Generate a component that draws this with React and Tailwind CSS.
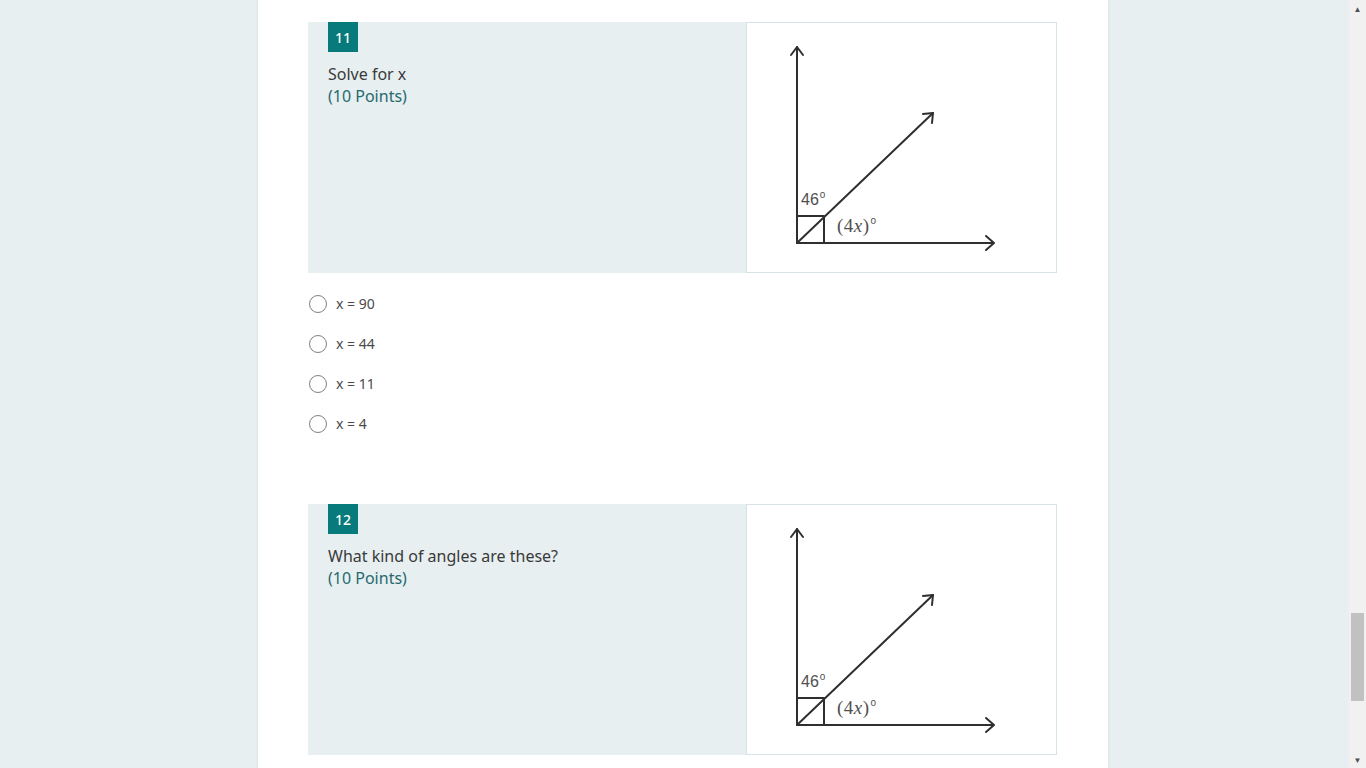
import React from 'react'

const questions = [
  {
    n: 11,
    title: 'Solve for x',
    points: '(10 Points)',
    options: ['x = 90', 'x = 44', 'x = 11', 'x = 4'],
  },
  {
    n: 12,
    title: 'What kind of angles are these?',
    points: '(10 Points)',
    options: [],
  },
]

function AngleFigure () {
  // open chevron arrows, drawn like the scanned worksheet image
  return (
    <svg width="309" height="248" viewBox="0 0 309 248" className="block">
      <g stroke="#2f2f2f" strokeWidth="2" fill="none" strokeLinecap="round" strokeLinejoin="round">
        <line x1="50" y1="220" x2="50" y2="24" />
        <polyline points="44,32 50,24 56,32" />
        <line x1="50" y1="220" x2="246" y2="220" />
        <polyline points="239,213 247,220 239,227" />
        <line x1="50" y1="220" x2="186" y2="90" />
        <polyline points="176,91 186,90 185,100" />
        <polyline points="50,193 77,193 77,220" />
      </g>
      <text x="54" y="182" fontFamily="'Liberation Sans', Arial, sans-serif" fontSize="16" fill="#505050">
        46<tspan dx="1" dy="-7" fontSize="10">o</tspan>
      </text>
      <text x="90" y="209" fontFamily="'Liberation Serif', serif" fontSize="19" fill="#505050" letterSpacing="0.5">
        (4<tspan fontStyle="italic">x</tspan>)<tspan dx="1" dy="-8" fontSize="10" fontFamily="'Liberation Sans', Arial, sans-serif">o</tspan>
      </text>
    </svg>
  )
}

function Question ({ q }) {
  return (
    <div>
      <div className="flex bg-[#e7eff1] h-[251px]">
        <div className="flex-1 pl-5">
          <div className="w-[30px] h-[30px] bg-[#077b7b] text-white text-[14px] font-medium flex items-center justify-center">
            {q.n}
          </div>
          <div className="mt-[11px] text-[16px] leading-[22px] text-[#3a3a3a]">{q.title}</div>
          <div className="text-[16px] leading-[22px] text-[#266a6e]">{q.points}</div>
        </div>
        <div className="w-[311px] h-[251px] bg-white border border-[#d6e2e5]">
          <AngleFigure />
        </div>
      </div>
      {q.options.length > 0 && (
        <div className="pt-[22px] flex flex-col gap-[22px]">
          {q.options.map(o => (
            <label key={o} className="flex items-center h-[18px] text-[14px] text-[#4a4a4a]">
              <span className="w-[18px] h-[18px] rounded-full border border-[#808080] bg-white ml-px" />
              <span className="ml-[9px] -mt-[2px]">{o}</span>
            </label>
          ))}
        </div>
      )}
    </div>
  )
}

export default function App () {
  return (
    <div className="relative h-[768px] overflow-hidden bg-[#e8eff1]" style={{ fontFamily: "'Segoe UI', 'Noto Sans', sans-serif" }}>
      <div className="flex justify-center">
        <div className="w-[850px] h-[768px] bg-white shadow-[0_0_3px_rgba(0,0,0,0.08)] pl-[50px] pr-[51px] pt-[22px]">
          <Question q={questions[0]} />
          <div className="h-[71px]" />
          <Question q={questions[1]} />
        </div>
      </div>
      <div className="absolute right-0 top-0 w-[17px] h-[768px] bg-[#f1f1f1] flex flex-col items-center">
        <div className="h-[17px] flex items-center justify-center text-[#505050] text-[8px]">▲</div>
        <div className="flex-1 w-full px-[2px] pt-[596px]">
          <div className="h-[88px] bg-[#c1c1c1]" />
        </div>
        <div className="h-[17px] flex items-center justify-center text-[#505050] text-[8px]">▼</div>
      </div>
    </div>
  )
}
